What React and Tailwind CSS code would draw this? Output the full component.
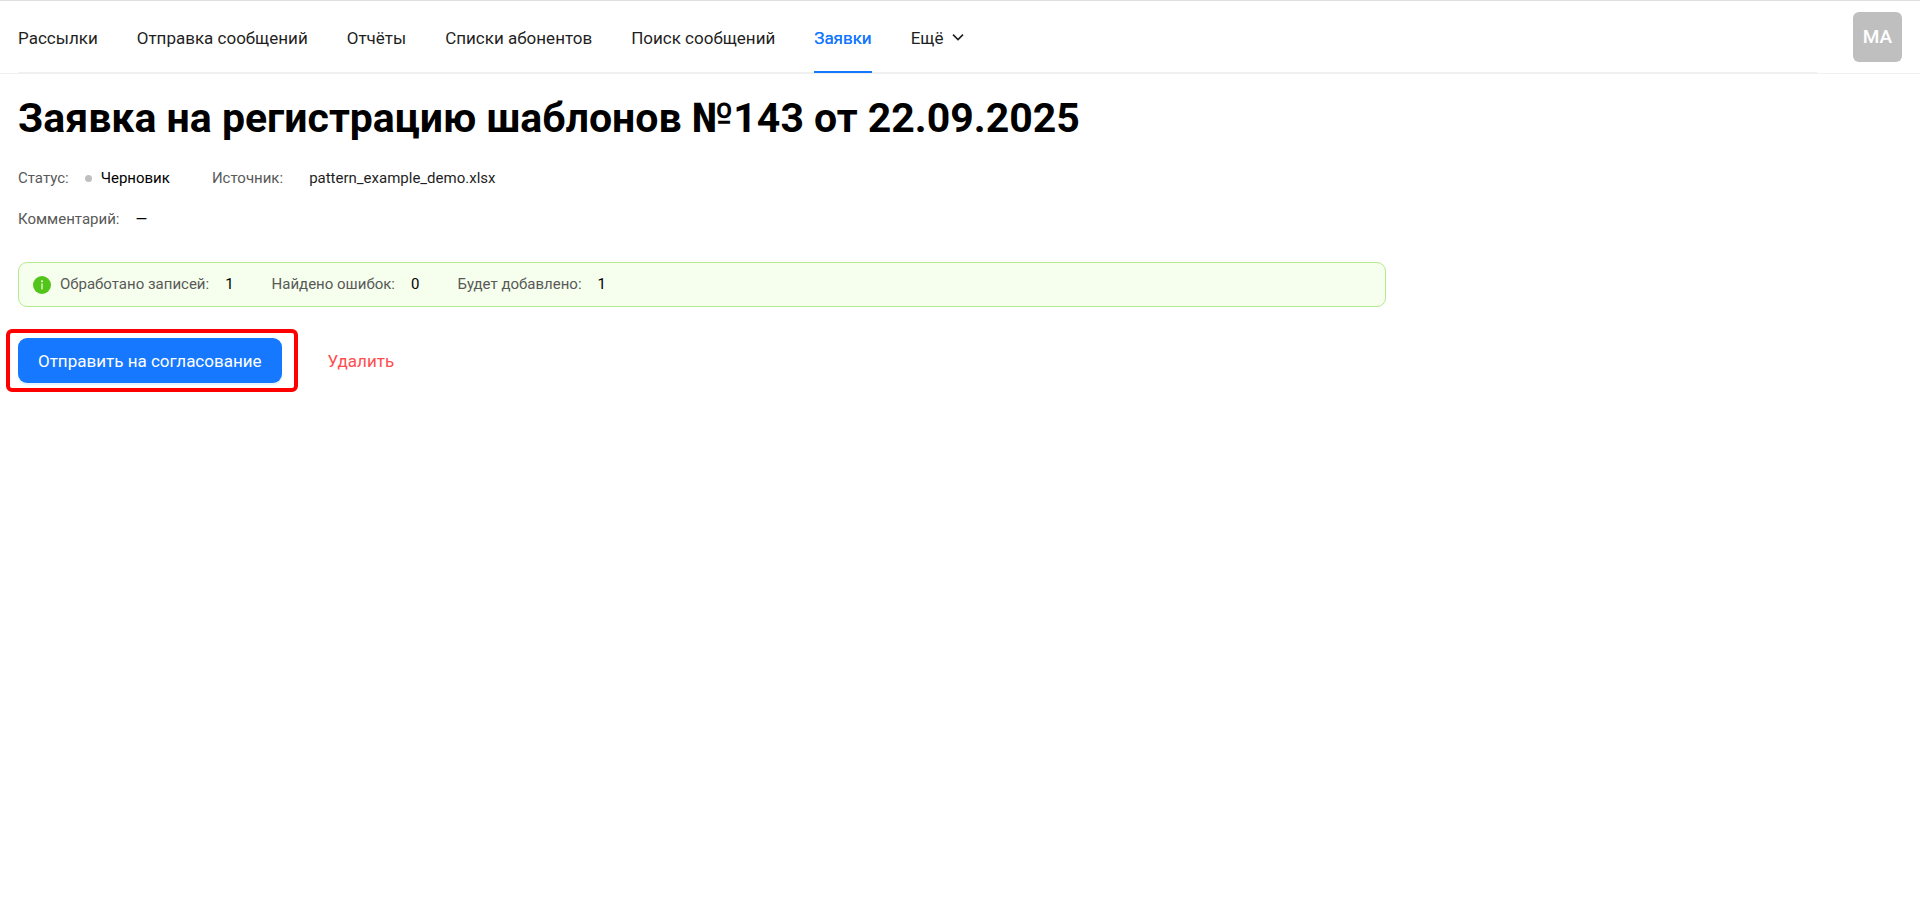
import { useState } from 'react'

const navItems = [
  'Рассылки',
  'Отправка сообщений',
  'Отчёты',
  'Списки абонентов',
  'Поиск сообщений',
  'Заявки',
]

const stats = [
  { label: 'Обработано записей:', value: 1 },
  { label: 'Найдено ошибок:', value: 0 },
  { label: 'Будет добавлено:', value: 1 },
]

function Chevron() {
  return (
    <svg width="12" height="12" viewBox="0 0 12 12" fill="none" stroke="currentColor" strokeWidth="1.6" aria-hidden="true">
      <path d="M1 2.6 6 7.6l5-5" />
    </svg>
  )
}

function InfoIcon() {
  return (
    <svg width="18" height="18" viewBox="0 0 18 18" aria-hidden="true">
      <circle cx="9" cy="9" r="9" fill="#52c41a" />
      <circle cx="9" cy="5.2" r="1" fill="#f6ffed" />
      <rect x="8.4" y="7.4" width="1.2" height="6" fill="#f6ffed" />
    </svg>
  )
}

function Header({ active, onSelect }) {
  return (
    <header className="flex items-start justify-between border-t border-b border-t-[#dedede] border-b-[#f0f0f0] px-[18px]">
      <nav className="mr-9 flex flex-1 gap-[39px] border-b border-[#f0f0f0] text-[17px] leading-7">
        {navItems.map(item => (
          <a
            key={item}
            href="#"
            onClick={() => onSelect(item)}
            className={
              item === active
                ? '-mb-px border-b-2 border-[#1677ff] pt-[23px] pb-[19px] text-[#1677ff] [text-shadow:0_0_0.25px_currentcolor]'
                : 'pt-[23px] pb-[19px]'
            }
          >
            {item}
          </a>
        ))}
        <button className="flex items-center gap-2 self-start pt-[23px] pb-[19px]">
          Ещё
          <Chevron />
        </button>
      </nav>
      <button className="mt-[11px] h-[50px] w-[49px] rounded-md bg-[#bfbfbf] text-[19px] font-medium text-white">MA</button>
    </header>
  )
}

export default function App() {
  const [active, setActive] = useState('Заявки')

  return (
    <div className="bg-white font-[Roboto,'Noto_Sans',sans-serif] text-[#1f1f1f]">
      <Header active={active} onSelect={setActive} />
      <main className="px-[18px] pt-[18px]">
        <h1 className="text-[41px] leading-[52px] font-bold text-black">
          Заявка на регистрацию шаблонов №143 от 22.09.2025
        </h1>

        <dl className="mt-[23px] flex flex-wrap gap-x-[42px] gap-y-[18px] text-[15px] leading-[23px]">
          <div className="flex gap-4">
            <dt className="text-[#595959]">Статус:</dt>
            <dd className="flex items-center gap-[9px] text-black">
              <span className="size-[7px] rounded-full bg-[#bfbfbf]" />
              Черновик
            </dd>
          </div>
          <div className="flex gap-[26px]">
            <dt className="text-[#595959]">Источник:</dt>
            <dd>pattern_example_demo.xlsx</dd>
          </div>
          <div className="flex w-full gap-4">
            <dt className="text-[#595959]">Комментарий:</dt>
            <dd className="text-black">—</dd>
          </div>
        </dl>

        <div className="mt-[31px] flex max-w-[1368px] items-center gap-[9px] rounded-[9px] border border-[#b7eb8f] bg-[#f6ffed] px-3.5 py-2.5 text-[15px] leading-[23px]">
          <InfoIcon />
          <dl className="flex gap-[38px]">
            {stats.map(({ label, value }) => (
              <div key={label} className="flex gap-4">
                <dt className="text-[#595959]">{label}</dt>
                <dd className="text-black">{value}</dd>
              </div>
            ))}
          </dl>
        </div>

        <div className="-ml-3 mt-[22px] flex items-center gap-3 text-[17px] leading-7">
          <div className="flex rounded-md border-4 border-[#ff0000] py-[5px] pr-3 pl-2">
            <button className="h-[45px] rounded-[9px] bg-[#1677ff] px-5 text-white shadow-[0_2px_0_rgba(5,145,255,0.1)]">
              Отправить на согласование
            </button>
          </div>
          <button className="px-[18px] py-2 text-[#ff4d4f]">Удалить</button>
        </div>
      </main>
    </div>
  )
}
